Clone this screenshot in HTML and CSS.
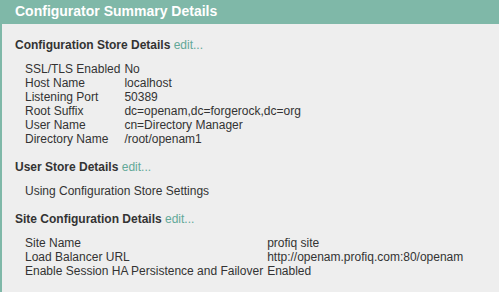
FILE: index.html
```html
<!DOCTYPE html>
<html>
<head>
<meta charset="utf-8">
<link rel="stylesheet" href="styles.css">
</head>
<body>
<div class="panel">
  <div class="header">Configurator Summary Details</div>
  <div class="content">
    <div class="section-title">Configuration Store Details <a class="edit">edit...</a></div>
    <table class="details details-store">
      <tr><td>SSL/TLS Enabled</td><td>No</td></tr>
      <tr><td>Host Name</td><td>localhost</td></tr>
      <tr><td>Listening Port</td><td>50389</td></tr>
      <tr><td>Root Suffix</td><td>dc=openam,dc=forgerock,dc=org</td></tr>
      <tr><td>User Name</td><td>cn=Directory Manager</td></tr>
      <tr><td>Directory Name</td><td>/root/openam1</td></tr>
    </table>
    <div class="section-title">User Store Details <a class="edit">edit...</a></div>
    <div class="note">Using Configuration Store Settings</div>
    <div class="section-title">Site Configuration Details <a class="edit">edit...</a></div>
    <table class="details">
      <tr><td>Site Name</td><td>profiq site</td></tr>
      <tr><td>Load Balancer URL</td><td>http://openam.profiq.com:80/openam</td></tr>
      <tr><td>Enable Session HA Persistence and Failover</td><td>Enabled</td></tr>
    </table>
  </div>
</div>
</body>
</html>
```
FILE: styles.css
```css
html, body {
  margin: 0;
  padding: 0;
  background: #eeeeee;
}
body {
  font-family: "Liberation Sans", Arial, sans-serif;
  color: #333333;
  width: 499px;
  height: 292px;
  overflow: hidden;
}
.panel {
  border-left: 2px solid #7fb8a8;
  height: 292px;
  box-sizing: border-box;
}
.header {
  background: #7fb8a8;
  color: #ffffff;
  font-weight: bold;
  font-size: 14px;
  height: 24px;
  line-height: 22px;
  margin-left: -2px;
  padding-left: 15px;
}
.content {
  padding: 14px 0 0 13px;
}
.section-title {
  font-weight: bold;
  font-size: 12px;
  line-height: 14px;
  margin-bottom: 10px;
}
.edit {
  font-weight: normal;
  color: #62a898;
}
.details {
  border-collapse: collapse;
  margin-left: 10px;
  font-size: 12px;
  margin-bottom: 14px;
}
.details-store {
  margin-top: 1px;
}
.details td {
  padding: 0;
  line-height: 14px;
  white-space: nowrap;
}
.details td:first-child {
  padding-right: 4px;
}
.note {
  font-size: 12px;
  line-height: 14px;
  margin-left: 10px;
  margin-bottom: 14px;
}
```
